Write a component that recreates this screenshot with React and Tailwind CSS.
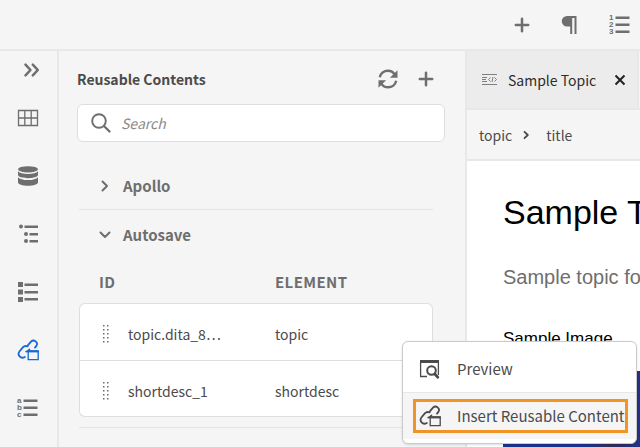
import React from "react";

const ui = "font-['Noto_Sans_CJK_SC',sans-serif]";

function DoubleChevron() {
  return (
    <svg width="22" height="22" viewBox="0 0 22 22" fill="none" stroke="currentColor" strokeWidth="2.500" strokeLinecap="round" strokeLinejoin="round">
      <path d="M4.500 5.700l5 5.300-5 5.300M11.800 5.700l5 5.300-5 5.300" />
    </svg>
  );
}

function GridIcon() {
  return (
    <svg width="22" height="22" viewBox="0 0 22 22" fill="none" stroke="currentColor" strokeWidth="1.3">
      <path d="M1.500 3.500h19v15h-19zM1.500 11h19M7.800 3.500v15M14.200 3.500v15" />
    </svg>
  );
}

function DatabaseIcon() {
  return (
    <svg width="22" height="22" viewBox="0 0 22 22" fill="currentColor">
      <ellipse cx="11" cy="4.300" rx="10" ry="3.100" />
      <path d="M1 6.200c1.500 1.800 5 2.700 10 2.700s8.500-.9 10-2.700v3.600c0 2-4.500 3.400-10 3.400S1 11.800 1 9.800z" />
      <path d="M1 12.200c1.500 1.900 5 2.800 10 2.800s8.500-.9 10-2.800v5c0 2-4.500 3.500-10 3.500S1 19.200 1 17.200z" />
    </svg>
  );
}

function OutlineIcon() {
  return (
    <svg width="22" height="22" viewBox="0 0 22 22" fill="currentColor">
      <circle cx="4" cy="3.500" r="2" />
      <circle cx="9" cy="11" r="2" />
      <circle cx="9" cy="18" r="2" />
      <path d="M7.500 2.500H21V5H7.500zM12.500 10H21v2.500h-8.500zM12.500 17H21v2.500h-8.500z" />
    </svg>
  );
}

function BlockListIcon() {
  return (
    <svg width="22" height="22" viewBox="0 0 22 22" fill="currentColor">
      <path d="M1 1h5v5H1zM1 8.500h5v5H1zM1 16h5v5H1zM7.500 2.500H21V5H7.500zM7.500 10H21v2.500H7.500zM7.500 17H21v2.500H7.500z" />
    </svg>
  );
}

function ReuseIcon() {
  return (
    <svg width="22" height="22" viewBox="0 0 22 22" fill="none" stroke="currentColor">
      <g strokeWidth="1.800" strokeLinecap="round">
        <path d="M11 6.200l3-3.600c2.900-2.800 7.600.7 5.400 4.300L18 8.600" />
        <path d="M9.200 12.600c1.300-.2 2.400-1 3.200-2.200" />
        <path d="M10.600 7.400c-2-.9-3.600-.3-4.800 1L2.600 12.200c-2.900 3.700 1.200 8.200 5.200 5.800" />
      </g>
      <path strokeWidth="1.300" d="M11.200 12.200h10v8.500h-10z" />
      <path strokeWidth="2.200" d="M10.600 12.300h11.200" />
    </svg>
  );
}

function LabelListIcon({ labels }) {
  return (
    <svg width="24" height="22" viewBox="0 0 24 22" fill="currentColor">
      <g className="font-['Liberation_Sans',sans-serif] text-[8px] font-bold">
        <text x="1" y="6">{labels[0]}</text>
        <text x="1" y="13">{labels[1]}</text>
        <text x="1" y="20">{labels[2]}</text>
      </g>
      <path d="M7.500 2.500h14v2.500h-14zM7.500 9.500h14V12h-14zM7.500 16.500h14V19h-14z" />
    </svg>
  );
}

function PlusIcon() {
  return (
    <svg width="16" height="16" viewBox="0 0 16 16" fill="none" stroke="currentColor" strokeWidth="2.500" strokeLinecap="round">
      <path d="M8 1.800v12.400M1.800 8h12.400" />
    </svg>
  );
}

function ParagraphIcon() {
  return (
    <svg width="18" height="20" viewBox="0 0 18 20" fill="currentColor">
      <path d="M7 1h9.500v18h-2V3h-2.300v16h-2V11.500H7A5.250 5.250 0 0 1 7 1z" />
    </svg>
  );
}

function RefreshIcon() {
  return (
    <svg width="20" height="20" viewBox="0 0 20 20" fill="none" stroke="currentColor" strokeWidth="2.400">
      <path d="M1.800 8.200C2.600 4.400 6 1.700 10 1.700c2.900 0 5.200 1.400 6.500 3.500M18.200 11.800c-.8 3.800-4.200 6.500-8.200 6.500-2.900 0-5.200-1.400-6.500-3.500" />
      <path fill="currentColor" stroke="none" d="M19.500 1.200v7.600h-7.600zM.5 18.800v-7.600h7.600z" />
    </svg>
  );
}

function SearchIcon() {
  return (
    <svg width="20" height="20" viewBox="0 0 20 20" fill="none" stroke="currentColor" strokeLinecap="round">
      <circle cx="8" cy="8" r="6.800" strokeWidth="1.900" />
      <path strokeWidth="2.300" d="M13.200 13.200l5.300 5.300" />
    </svg>
  );
}

function Chevron({ down }) {
  return (
    <svg width="12" height="12" viewBox="0 0 12 12" fill="none" stroke="currentColor" strokeWidth="2" strokeLinecap="round" strokeLinejoin="round">
      <path d={down ? "M1.500 3.500L6 8l4.500-4.500" : "M3.500 1.500L8 6l-4.500 4.500"} />
    </svg>
  );
}

function CrumbChevron() {
  return (
    <svg width="8" height="10" viewBox="0 0 8 10" fill="none" stroke="currentColor" strokeWidth="1.800" strokeLinecap="round" strokeLinejoin="round">
      <path d="M2.500 1.800L5.800 5 2.500 8.200" />
    </svg>
  );
}

function GripIcon() {
  return (
    <svg width="8" height="18" viewBox="0 0 8 18" fill="#6e6e6e">
      {[1, 5, 9, 13, 17].map((y) => (
        <g key={y}>
          <rect x="1" y={y - 1} width="1.500" height="1.500" />
          <rect x="5" y={y - 1} width="1.500" height="1.500" />
        </g>
      ))}
    </svg>
  );
}

function TopicFileIcon() {
  return (
    <svg width="16" height="14" viewBox="0 0 16 14" fill="none" stroke="#808080">
      <path d="M0 1.500h15M0 11.500h15" />
      <path d="M0 4.500h5M0 6.500h4M0 8.500h5" />
      <path d="M8.500 4.500l-2 2 2 2M12.500 4.500l2 2-2 2M11 4l-1 5" />
    </svg>
  );
}

function PreviewIcon() {
  return (
    <svg width="22" height="22" viewBox="0 0 22 22" fill="none" stroke="currentColor">
      <path strokeWidth="3" d="M1 3.500h19" />
      <path strokeWidth="1.300" d="M1.600 4v14.500H8M19.400 4v13" />
      <circle cx="12.500" cy="12.500" r="4.300" strokeWidth="2" />
      <path strokeWidth="2.800" strokeLinecap="round" d="M15.800 16l3 3.200" />
    </svg>
  );
}

const rail = [
  { label: "Repository", icon: <GridIcon /> },
  { label: "Data", icon: <DatabaseIcon /> },
  { label: "Outline", icon: <OutlineIcon /> },
  { label: "Glossary", icon: <BlockListIcon /> },
  { label: "Reusable contents", icon: <ReuseIcon />, active: true },
  { label: "Conditions", icon: <LabelListIcon labels={["a", "b", "c"]} /> },
];

const rows = [
  { id: "topic.dita_8…", element: "topic" },
  { id: "shortdesc_1", element: "shortdesc" },
];

function Rail() {
  return (
    <nav className="flex w-[59px] shrink-0 flex-col items-center border-r-2 border-[#e8e8e8] pr-0.5 pt-2 text-[#6e6e6e]">
      <button aria-label="Expand" className="ml-2 flex h-[22px] items-center">
        <DoubleChevron />
      </button>
      <ul className="mt-2 flex flex-col">
        {rail.map((item) => (
          <li key={item.label}>
            <button
              aria-label={item.label}
              className={`flex h-[58px] w-12 items-center justify-center ${item.active ? "text-[#1469d8]" : ""}`}
            >
              {item.icon}
            </button>
          </li>
        ))}
      </ul>
    </nav>
  );
}

function ContentTable() {
  return (
    <table className="w-full table-fixed border-separate border-spacing-0 text-left text-[#4b4b4b]">
      <colgroup>
        <col className="w-[49px]" />
        <col className="w-[147px]" />
        <col />
      </colgroup>
      <thead>
        <tr className="h-[43px] text-[15px] text-[#6e6e6e]">
          <th colSpan={2} className="pl-5 tracking-wide">ID</th>
          <th className="tracking-wide">ELEMENT</th>
        </tr>
      </thead>
      <tbody>
        {rows.map((row, i) => {
          const first = i === 0;
          return (
            <tr key={row.id} className={first ? "h-[58px]" : "h-14"}>
              <td className={`border-b border-l border-[#dedede] bg-white pl-[22px] pt-1 ${first ? "rounded-tl-md border-t" : "rounded-bl-md"}`}>
                <GripIcon />
              </td>
              <td className={`border-b border-[#dedede] bg-white pt-1 ${first ? "border-t" : ""}`}>{row.id}</td>
              <td className={`border-b border-r border-[#dedede] bg-white pt-1 ${first ? "rounded-tr-md border-t" : "rounded-br-md"}`}>
                {row.element}
              </td>
            </tr>
          );
        })}
      </tbody>
    </table>
  );
}

function Panel() {
  return (
    <section className="w-[408px] shrink-0 border-r-2 border-[#e8e8e8] pl-[18px] pr-5">
      <div className="flex h-[53px] items-center pt-0.5 text-[#6e6e6e]">
        <h1 className="grow font-bold text-[#4b4b4b]">Reusable Contents</h1>
        <button aria-label="Refresh"><RefreshIcon /></button>
        <button aria-label="Add" className="ml-5 mr-[11px]"><PlusIcon /></button>
      </div>
      <label className="flex h-[38px] items-center gap-2.5 rounded-md border border-[#dedede] bg-white pl-[13px] text-[#6e6e6e]">
        <SearchIcon />
        <input
          type="search"
          aria-label="Search"
          placeholder="Search"
          className="min-w-0 grow bg-transparent italic outline-none placeholder:text-[#8a8a8a]"
        />
      </label>
      <div className="ml-0.5 mr-3 pt-5 text-[#6e6e6e]">
        <button className="flex h-12 w-full items-center gap-3 border-b border-[#e4e4e4] pl-5 text-[15px] font-bold">
          <Chevron /> Apollo
        </button>
        <div className="border-b border-[#e4e4e4] pb-2.5">
          <button className="flex h-[50px] w-full items-center gap-3 pl-5 text-[15px] font-bold">
            <Chevron down /> Autosave
          </button>
          <ContentTable />
        </div>
      </div>
    </section>
  );
}

function Editor() {
  return (
    <main className="flex min-w-0 grow flex-col">
      <div className="flex h-[59px] shrink-0 border-b-2 border-[#e8e8e8]">
        <div className="flex w-[172px] shrink-0 items-center border-r-2 border-[#e8e8e8] bg-[#ececec] pl-[15px] text-[#2c2c2c]">
          <TopicFileIcon />
          <span className="ml-2.5 grow whitespace-nowrap">Sample Topic</span>
          <button aria-label="Close" className="mr-[11px]">
            <svg width="12" height="12" viewBox="0 0 12 12" fill="none" stroke="#222" strokeWidth="2">
              <path d="M1.500 1.500l9 9M10.500 1.500l-9 9" />
            </svg>
          </button>
        </div>
      </div>
      <nav className="flex h-[51px] shrink-0 items-center border-b-2 border-[#e8e8e8] pl-3 text-[#4b4b4b]">
        <a href="#topic">topic</a>
        <span className="ml-2.5 mr-4"><CrumbChevron /></span>
        <a href="#title">title</a>
      </nav>
      <article className="grow overflow-hidden bg-white pl-9 font-['Liberation_Sans',Arial,sans-serif]">
        <h2 className="mt-7 whitespace-nowrap text-[34px] leading-[46px] text-black">Sample Topic</h2>
        <p className="mt-7 whitespace-nowrap text-xl leading-[28px] text-[#6e6e6e]">Sample topic for reuse</p>
        <p className="mt-9 whitespace-nowrap text-[17px] leading-6 text-black">Sample Image</p>
        <div className="mt-5 h-40 bg-linear-to-r from-[#1c3393] from-60% via-[#352b52] via-80% to-[#24318a]" />
      </article>
    </main>
  );
}

function ContextMenu() {
  return (
    <div role="menu" className="absolute left-[402px] top-[341px] flex w-[235px] flex-col rounded-md border border-[#cacaca] bg-white pb-1 pt-1 text-[15px] text-[#4b4b4b] shadow-sm">
      <button role="menuitem" className="flex h-[47px] items-center gap-4 border-b border-[#e8e8e8] pl-4">
        <PreviewIcon /> Preview
      </button>
      <button role="menuitem" className="flex h-[46px] items-center bg-[#f5f5f5] pl-2.5 pr-2">
        <span className="flex h-[34px] grow items-center gap-4 whitespace-nowrap border-3 border-[#f29423] pl-[3px]">
          <ReuseIcon /> Insert Reusable Content
        </span>
      </button>
    </div>
  );
}

export default function App() {
  return (
    <div className={`relative flex h-screen flex-col overflow-hidden bg-[#f5f5f5] text-sm ${ui}`}>
      <header className="flex h-[51px] shrink-0 items-center justify-end border-b-2 border-[#e8e8e8] pr-2 text-[#6e6e6e]">
        <button aria-label="Insert element"><PlusIcon /></button>
        <button aria-label="Insert paragraph" className="ml-[30px]"><ParagraphIcon /></button>
        <button aria-label="Insert numbered list" className="ml-[30px]"><LabelListIcon labels={["1", "2", "3"]} /></button>
      </header>
      <div className="flex min-h-0 grow">
        <Rail />
        <Panel />
        <Editor />
      </div>
      <ContextMenu />
    </div>
  );
}
